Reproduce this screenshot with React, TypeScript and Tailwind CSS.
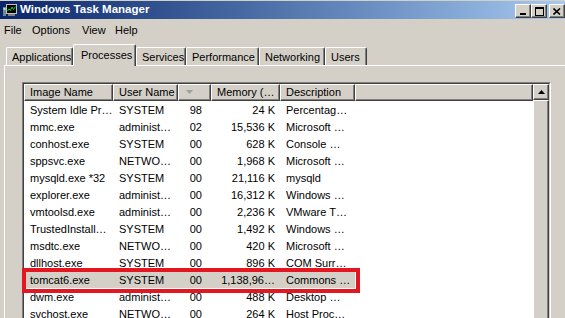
import React from 'react'

interface Proc {
  name: string
  user: string
  cpu: string
  mem: string
  desc: string
}

const procs: Proc[] = [
  { name: 'System Idle Pr…', user: 'SYSTEM', cpu: '98', mem: '24 K', desc: 'Percentag…' },
  { name: 'mmc.exe', user: 'administ…', cpu: '02', mem: '15,536 K', desc: 'Microsoft …' },
  { name: 'conhost.exe', user: 'SYSTEM', cpu: '00', mem: '628 K', desc: 'Console …' },
  { name: 'sppsvc.exe', user: 'NETWO…', cpu: '00', mem: '1,968 K', desc: 'Microsoft …' },
  { name: 'mysqld.exe *32', user: 'SYSTEM', cpu: '00', mem: '21,116 K', desc: 'mysqld' },
  { name: 'explorer.exe', user: 'administ…', cpu: '00', mem: '16,312 K', desc: 'Windows …' },
  { name: 'vmtoolsd.exe', user: 'administ…', cpu: '00', mem: '2,236 K', desc: 'VMware T…' },
  { name: 'TrustedInstall…', user: 'SYSTEM', cpu: '00', mem: '1,492 K', desc: 'Windows …' },
  { name: 'msdtc.exe', user: 'NETWO…', cpu: '00', mem: '420 K', desc: 'Microsoft …' },
  { name: 'dllhost.exe', user: 'SYSTEM', cpu: '00', mem: '896 K', desc: 'COM Surr…' },
  { name: 'tomcat6.exe', user: 'SYSTEM', cpu: '00', mem: '1,138,96…', desc: 'Commons …' },
  { name: 'dwm.exe', user: 'administ…', cpu: '00', mem: '488 K', desc: 'Desktop …' },
  { name: 'svchost.exe', user: 'NETWO…', cpu: '00', mem: '264 K', desc: 'Host Proc…' },
]

const bevel =
  'border-t border-l border-r border-b border-t-white border-l-white border-r-[#404040] border-b-[#404040] shadow-[inset_-1px_-1px_0_#808080]'

const tabs = [
  { label: 'Applications', w: 'w-[67px]' },
  { label: 'Processes', w: 'w-[63px]', active: true },
  { label: 'Services', w: 'w-[50px]' },
  { label: 'Performance', w: 'w-[73px]' },
  { label: 'Networking', w: 'w-[66px]' },
  { label: 'Users', w: 'w-[42px]' },
]

const AppIcon = () => (
  <svg width="16" height="16" viewBox="0 0 16 16">
    <rect x="1" y="5" width="3" height="9" fill="#6b8a8a" />
    <rect x="1.5" y="6" width="2" height="2" fill="#bfe0e0" />
    <rect x="4" y="2" width="11" height="10" fill="#c0c0c0" />
    <rect x="5" y="3" width="9" height="8" fill="#000" />
    <polyline points="5.5,9 7,7 8.5,8.5 10,5 11.5,7.5 13.5,4.5" fill="none" stroke="#00e000" strokeWidth="1" />
    <rect x="6" y="12" width="7" height="2" fill="#808080" />
  </svg>
)

const WinButton = ({ children, className = '' }: { children: React.ReactNode; className?: string }) => (
  <div className={`w-[16px] h-[14px] bg-[#d4d0c8] flex items-center justify-center ${bevel} ${className}`}>
    {children}
  </div>
)

const Header = ({ w, children }: { w: string; children?: React.ReactNode }) => (
  <div className={`${w} h-[17px] shrink-0 bg-[#d4d0c8] flex items-center pl-[5px] overflow-hidden whitespace-nowrap ${bevel}`}>
    {children}
  </div>
)

export default function App() {
  return (
    <div className="w-[565px] h-[318px] overflow-hidden bg-[#d4d0c8] font-['Liberation_Sans',Arial,sans-serif] text-[11px] text-black leading-none">
      {/* title bar */}
      <div className="mt-[1px] h-[18px] flex items-center bg-gradient-to-r from-[#0a246a] to-[#a6caf0]">
        <div className="ml-[2px] w-[16px] h-[16px]">
          <AppIcon />
        </div>
        <span className="ml-[2px] font-bold text-white text-[11.5px]">Windows Task Manager</span>
        <div className="ml-auto flex items-center mt-[2px]">
          <WinButton>
            <div className="w-[6px] h-[2px] bg-black mt-[6px] -ml-[1px]" />
          </WinButton>
          <WinButton>
            <div className="w-[9px] h-[9px] border border-black border-t-2" />
          </WinButton>
          <WinButton className="ml-[2px]">
            <svg width="8" height="7" viewBox="0 0 8 7">
              <path d="M0.5 0.5 L7 6.5 M7 0.5 L0.5 6.5" stroke="#000" strokeWidth="1.6" />
            </svg>
          </WinButton>
        </div>
      </div>

      {/* menu bar */}
      <div className="h-[22px] flex items-center pl-[4px]">
        <span className="w-[28px]">File</span>
        <span className="w-[50px]">Options</span>
        <span className="w-[33px]">View</span>
        <span>Help</span>
      </div>

      {/* tabs */}
      <div className="h-[24px] flex items-end pl-[6px]">
        {tabs.map((t) =>
          t.active ? (
            <div
              key={t.label}
              className={`${t.w} h-[22px] -mb-[1px] relative z-10 bg-[#d4d0c8] border-t border-l border-r border-t-white border-l-white border-r-[#404040] shadow-[inset_-1px_0_0_#808080] rounded-t-[2px] pl-[7px] pt-[5px]`}
            >
              {t.label}
            </div>
          ) : (
            <div
              key={t.label}
              className={`${t.w} h-[18px] bg-[#d4d0c8] border-t border-l border-r border-t-white border-l-white border-r-[#404040] shadow-[inset_-1px_0_0_#808080] rounded-t-[2px] pl-[5px] pt-[4px]`}
            >
              {t.label}
            </div>
          )
        )}
      </div>

      {/* tab panel */}
      <div className="ml-[4px] border-t border-l border-white pt-[16px] pl-[17px] h-[300px]">
        <div className="w-[529px] h-[260px] border-t border-l border-t-[#808080] border-l-[#808080] border-r border-r-white">
          <div className="h-full flex border-t border-l border-t-[#404040] border-l-[#404040] border-r border-r-[#d4d0c8] bg-white">
            <div className="flex-1 flex flex-col">
              <div className="flex">
                <Header w="w-[89px]">Image Name</Header>
                <Header w="w-[65px]">User Name</Header>
                <Header w="w-[33px]">
                  <svg width="8" height="5" viewBox="0 0 8 5" className="ml-[2px]">
                    <polygon points="0,0 7,0 3.5,4" fill="#a0a0a0" />
                  </svg>
                </Header>
                <Header w="w-[69px]">Memory (…</Header>
                <Header w="w-[75px]">Description</Header>
                <Header w="flex-1" />
              </div>
              {procs.map((p) => {
                const sel = p.name === 'tomcat6.exe'
                return (
                  <div key={p.name} className="relative flex h-[17px] items-center">
                    <div className={`flex h-full items-center pt-[1px] ${sel ? 'bg-[#d4d0c8]' : ''}`}>
                      <span className="w-[89px] pl-[6px] whitespace-nowrap">{p.name}</span>
                      <span className="w-[65px] pl-[6px] whitespace-nowrap">{p.user}</span>
                      <span className="w-[33px] pr-[9px] text-right">{p.cpu}</span>
                      <span className="w-[69px] pr-[5px] text-right whitespace-nowrap">{p.mem}</span>
                      <span className="w-[75px] pl-[6px] whitespace-nowrap">{p.desc}</span>
                    </div>
                    {sel && (
                      <div className="absolute -left-[2px] -top-[3px] w-[338px] h-[25px] border-[4px] border-[#e4161f]" />
                    )}
                  </div>
                )
              })}
            </div>
            {/* scrollbar */}
            <div className="w-[16px] flex flex-col bg-[#d4d0c8]">
              <div className={`h-[16px] flex items-center justify-center ${bevel}`}>
                <svg width="7" height="4" viewBox="0 0 7 4">
                  <polygon points="3.5,0 7,4 0,4" fill="#000" />
                </svg>
              </div>
              <div className={`flex-1 ${bevel}`} />
            </div>
          </div>
        </div>
      </div>
    </div>
  )
}
